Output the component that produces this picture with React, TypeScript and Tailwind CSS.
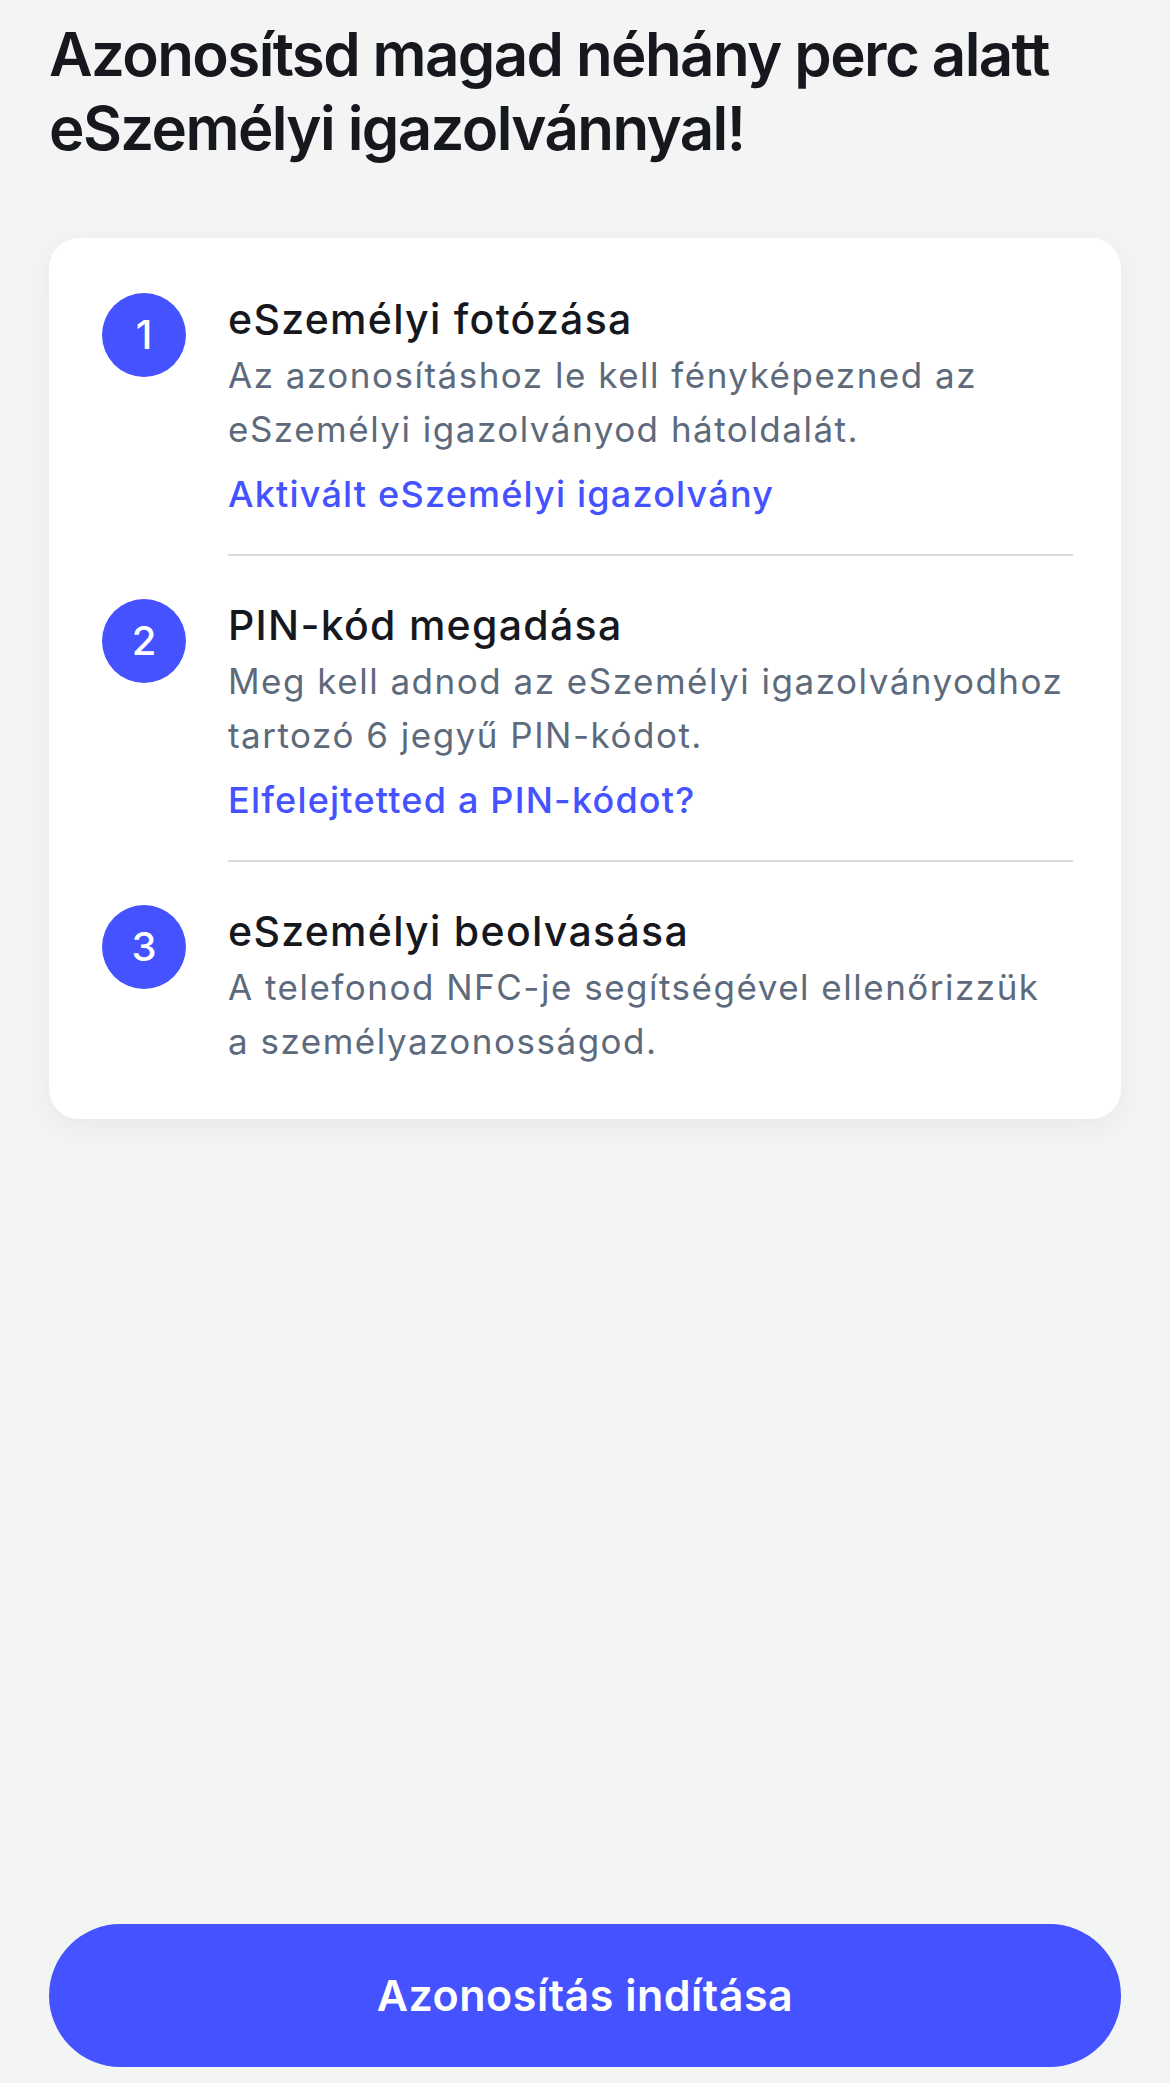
const steps = [
  {
    n: 1,
    title: 'eSzemélyi fotózása',
    text: 'Az azonosításhoz le kell fényképezned az eSzemélyi igazolványod hátoldalát.',
    link: 'Aktivált eSzemélyi igazolvány',
  },
  {
    n: 2,
    title: 'PIN-kód megadása',
    text: 'Meg kell adnod az eSzemélyi igazolványodhoz tartozó 6 jegyű PIN-kódot.',
    link: 'Elfelejtetted a PIN-kódot?',
  },
  {
    n: 3,
    title: 'eSzemélyi beolvasása',
    text: 'A telefonod NFC-je segítségével ellenőrizzük a személyazonosságod.',
  },
]

function Step({ n, title, text, link, last }: { n: number; title: string; text: string; link?: string; last: boolean }) {
  return (
    <div className="flex gap-[42px]">
      <div className="flex h-[84px] w-[84px] shrink-0 items-center justify-center rounded-full bg-[#4452ff] text-[40px] font-medium text-white">
        {n}
      </div>
      <div className="flex-1">
        <h2 className="text-[41px] leading-[52px] font-medium tracking-[1.3px] text-[#16181d]">{title}</h2>
        <p className="mt-[3px] pr-[6px] text-[35px] leading-[54px] tracking-[1.5px] text-[#5d6a7c]">{text}</p>
        {link && (
          <a className="mt-[14px] block text-[36px] leading-[48px] font-medium tracking-[1.2px] text-[#4452ff]">{link}</a>
        )}
        {!last && <div className="mt-[36px] mb-[43px] h-[2px] bg-[#d9dbde]" />}
      </div>
    </div>
  )
}

export default function App() {
  return (
    <div className="flex min-h-screen flex-col bg-[#f3f5f5] px-[49px] font-['Inter',sans-serif]">
      <h1 className="pt-[17px] text-[60px] leading-[74px] font-semibold tracking-[-1.6px] text-[#16181d]">
        Azonosítsd magad néhány perc alatt eSzemélyi igazolvánnyal!
      </h1>
      <div className="mt-[73px] rounded-[30px] bg-white pt-[55px] pr-[48px] pb-[51px] pl-[53px] shadow-[0_8px_30px_rgba(0,0,0,0.05)]">
        {steps.map((s, i) => (
          <Step key={s.n} {...s} last={i === steps.length - 1} />
        ))}
      </div>
      <div className="flex-1" />
      <button className="mb-[16px] flex h-[143px] w-full items-center justify-center rounded-full bg-[#4452ff] text-[43px] font-semibold tracking-[0.5px] text-white">
        Azonosítás indítása
      </button>
    </div>
  )
}
